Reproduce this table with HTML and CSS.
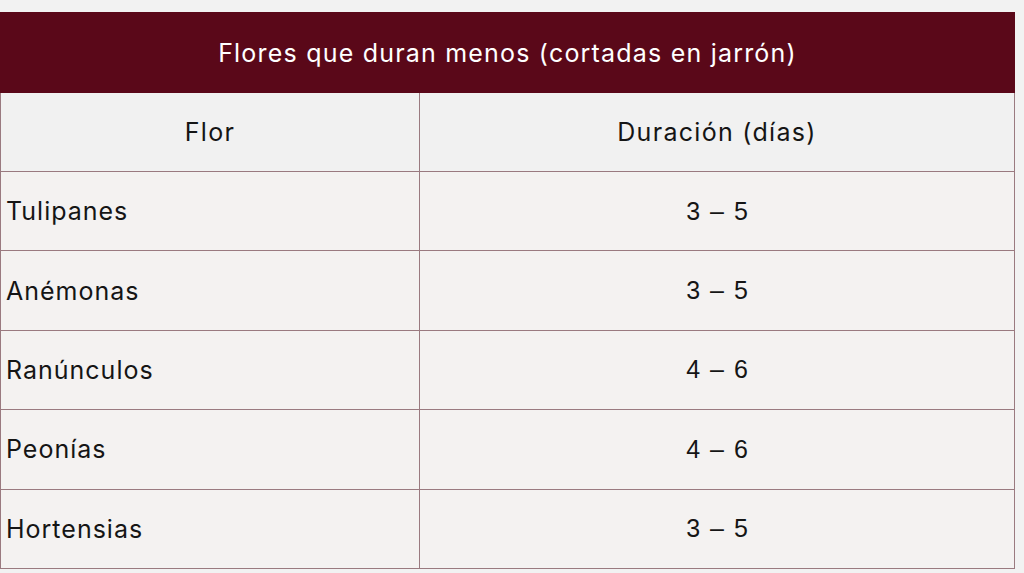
FILE: index.html
```html
<!DOCTYPE html>
<html lang="es">
<head>
<meta charset="utf-8">
<title>Flores que duran menos</title>
<link rel="stylesheet" href="styles.css">
</head>
<body>
<div class="wrap">
<table class="flowers">
  <colgroup><col class="col1"><col class="col2"></colgroup>
  <thead>
    <tr><th class="title" colspan="2">Flores que duran menos (cortadas en jarrón)</th></tr>
    <tr class="head"><th>Flor</th><th>Duración (días)</th></tr>
  </thead>
  <tbody>
    <tr><td class="name">Tulipanes</td><td class="num">3 – 5</td></tr>
    <tr><td class="name">Anémonas</td><td class="num">3 – 5</td></tr>
    <tr><td class="name">Ranúnculos</td><td class="num">4 – 6</td></tr>
    <tr><td class="name">Peonías</td><td class="num">4 – 6</td></tr>
    <tr><td class="name">Hortensias</td><td class="num">3 – 5</td></tr>
  </tbody>
</table>
</div>
</body>
</html>
```
FILE: styles.css
```css
html, body {
  margin: 0;
  padding: 0;
  background: #f2f2f2;
}
.wrap {
  padding-top: 12px;
  width: 1014px;
}
.flowers {
  width: 1014px;
  border-collapse: collapse;
  table-layout: fixed;
  font-family: "Inter", "Noto Sans", sans-serif;
  color: #151515;
}
.col1 { width: 419px; }
.col2 { width: 595px; }
.flowers th, .flowers td {
  border: 1px solid #9a7a80;
  padding: 0;
  font-weight: 400;
}
.title {
  background: #5a0819;
  color: #ffffff;
  height: 79px;
  font-size: 25px;
  letter-spacing: 1.2px;
  text-align: center;
  border-color: #5a0819 !important;
}
.head th {
  background: #f1f1f1;
  height: 78px;
  font-size: 25px;
  letter-spacing: 1.3px;
  text-align: center;
}
tbody td {
  background: #f4f2f1;
  height: 78.4px;
  font-size: 25px;
  letter-spacing: 1px;
}
.name {
  text-align: left;
  padding-left: 5px !important;
}
.num {
  text-align: center;
  font-family: "Liberation Sans", Arial, sans-serif;
  font-size: 25px;
  letter-spacing: 0;
  word-spacing: 3px;
}
```
